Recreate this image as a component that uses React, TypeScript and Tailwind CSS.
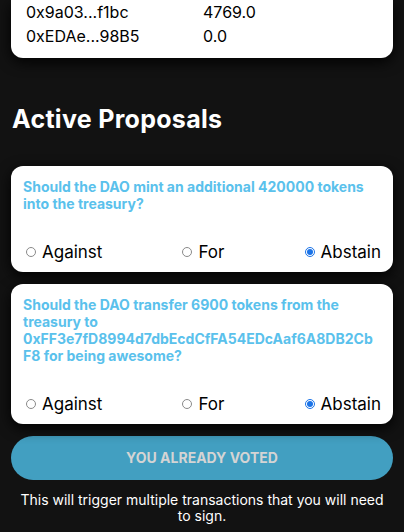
import { useState } from 'react';

type Holder = { address: string; balance: string };
type Proposal = { id: number; text: string; vote: string };

const holders: Holder[] = [
  { address: '0x9a03...f1bc', balance: '4769.0' },
  { address: '0xEDAe...98B5', balance: '0.0' },
];

const proposals: Proposal[] = [
  { id: 1, text: 'Should the DAO mint an additional 420000 tokens into the treasury?', vote: 'abstain' },
  {
    id: 2,
    text: 'Should the DAO transfer 6900 tokens from the treasury to 0xFF3e7fD8994d7dbEcdCfFA54EDcAaf6A8DB2CbF8 for being awesome?',
    vote: 'abstain',
  },
];

const options = [
  { value: 'against', label: 'Against' },
  { value: 'for', label: 'For' },
  { value: 'abstain', label: 'Abstain' },
];

function Radio({ checked }: { checked: boolean }) {
  if (checked) {
    return (
      <span className="flex h-[10px] w-[10px] items-center justify-center rounded-full border border-[#1a73e8] bg-white">
        <span className="h-[6px] w-[6px] rounded-full bg-[#1a73e8]" />
      </span>
    );
  }
  return <span className="h-[10px] w-[10px] rounded-full border border-[#8a8a8a] bg-white" />;
}

export default function App() {
  const [votes, setVotes] = useState<Record<number, string>>(
    Object.fromEntries(proposals.map((p) => [p.id, p.vote]))
  );

  return (
    <div className="min-h-screen bg-[#121212] px-[11px] pb-4 font-['Inter',sans-serif]">
      <div className="rounded-b-xl bg-white px-[15px] pb-[10px] shadow-[0_4px_14px_rgba(0,0,0,0.95)]">
        {holders.map((h) => (
          <div key={h.address} className="grid h-6 grid-cols-[177px_1fr] text-base leading-6 text-black">
            <span>{h.address}</span>
            <span>{h.balance}</span>
          </div>
        ))}
      </div>

      <h2 className="mt-[45px] ml-px text-[25px] leading-8 font-bold tracking-[0.3px] text-white">Active Proposals</h2>

      <div className="mt-[31px] flex flex-col gap-3">
        {proposals.map((p) => (
          <div key={p.id} className="rounded-xl bg-white px-3 pt-3 pb-2 shadow-[0_4px_14px_rgba(0,0,0,0.95)]">
            <p className="pr-1 text-sm leading-[17px] font-bold break-words text-[#5ac1ec]">{p.text}</p>
            <div className="mt-7 flex justify-between pl-[3px] text-[17px] leading-6 text-black">
              {options.map((o) => (
                <label
                  key={o.value}
                  className="flex cursor-pointer items-center gap-[6px]"
                  onClick={() => setVotes({ ...votes, [p.id]: o.value })}
                >
                  <Radio checked={votes[p.id] === o.value} />
                  <span>{o.label}</span>
                </label>
              ))}
            </div>
          </div>
        ))}
      </div>

      <button
        disabled
        className="mt-3 flex h-11 w-full items-center justify-center rounded-full bg-[#429fc1] text-sm font-bold text-[#d4d4d4] uppercase"
      >
        You already voted
      </button>

      <p className="mt-3 px-2 text-center text-sm leading-4 text-white">
        This will trigger multiple transactions that you will need to sign.
      </p>
    </div>
  );
}
